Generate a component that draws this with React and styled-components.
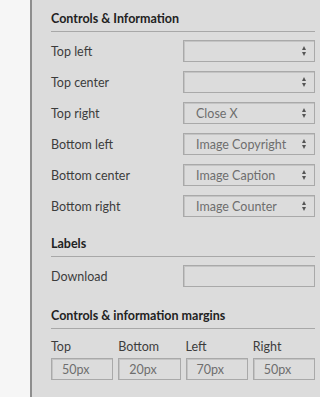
import styled, { createGlobalStyle } from 'styled-components';

const GlobalStyle = createGlobalStyle`
  html, body {
    margin: 0;
    padding: 0;
    background: #ffffff;
  }
  body {
    font-family: Lato, "Liberation Sans", sans-serif;
  }
`;

const Page = styled.div`
  display: flex;
  width: 320px;
  height: 397px;
  overflow: hidden;
`;

const Gutter = styled.div`
  width: 30px;
  flex-shrink: 0;
  background: #f6f6f6;
`;

const Panel = styled.div`
  flex: 1;
  background: #dcdcdc;
  border-left: 2px solid #8e8e8e;
  padding: 0 5px 0 19px;
`;

const SectionTitle = styled.div`
  margin-top: ${props => props.top}px;
  line-height: 20px;
  padding-bottom: 2px;
  border-bottom: 1px solid #a8a8a8;
  font-size: 12.5px;
  font-weight: 700;
  color: #222222;
`;

const RowList = styled.div`
  display: flex;
  flex-direction: column;
  gap: 9px;
  padding-top: 8px;
`;

const Row = styled.div`
  display: flex;
  align-items: center;
  justify-content: space-between;
  height: 22px;
`;

const Label = styled.span`
  font-size: 12.5px;
  color: #3c3c3c;
`;

const Field = styled.div`
  box-sizing: border-box;
  width: ${props => props.width || '132px'};
  height: 22px;
  display: flex;
  align-items: center;
  justify-content: space-between;
  padding: 0 8px 0 ${props => props.pad || 12}px;
  border: 1px solid #a9a9a9;
  box-shadow: inset 1px 1px 0 #c4c4c4;
  background: #dcdcdc;
  font-size: 12.5px;
  color: #6e6e6e;
`;

const Arrows = styled.span`
  display: flex;
  flex-direction: column;
  gap: 2px;
  margin-left: auto;
`;

const Tri = styled.span`
  width: 0;
  height: 0;
  border-left: 2.5px solid transparent;
  border-right: 2.5px solid transparent;
  ${props => (props.down ? 'border-top: 4px solid #555;' : 'border-bottom: 4px solid #555;')}
`;

const MarginGrid = styled.div`
  display: grid;
  grid-template-columns: repeat(4, 1fr);
  column-gap: 5px;
  padding-top: 10px;
`;

const MarginCell = styled.div`
  display: flex;
  flex-direction: column;
  gap: 3px;
`;

const MarginLabel = styled.span`
  font-size: 12.5px;
  line-height: 16px;
  color: #3c3c3c;
`;

const Select = ({ value }) => (
  <Field>
    <span>{value}</span>
    <Arrows>
      <Tri />
      <Tri down />
    </Arrows>
  </Field>
);

const positions = [
  ['Top left', ''],
  ['Top center', ''],
  ['Top right', 'Close X'],
  ['Bottom left', 'Image Copyright'],
  ['Bottom center', 'Image Caption'],
  ['Bottom right', 'Image Counter'],
];

const margins = [
  ['Top', '50px'],
  ['Bottom', '20px'],
  ['Left', '70px'],
  ['Right', '50px'],
];

export default function App() {
  return (
    <Page>
      <GlobalStyle />
      <Gutter />
      <Panel>
        <SectionTitle top={9}>Controls &amp; Information</SectionTitle>
        <RowList>
          {positions.map(([label, value]) => (
            <Row key={label}>
              <Label>{label}</Label>
              <Select value={value} />
            </Row>
          ))}
        </RowList>

        <SectionTitle top={17}>Labels</SectionTitle>
        <RowList>
          <Row>
            <Label>Download</Label>
            <Field />
          </Row>
        </RowList>

        <SectionTitle top={19}>Controls &amp; information margins</SectionTitle>
        <MarginGrid>
          {margins.map(([label, value]) => (
            <MarginCell key={label}>
              <MarginLabel>{label}</MarginLabel>
              <Field width="100%" pad={10}>{value}</Field>
            </MarginCell>
          ))}
        </MarginGrid>
      </Panel>
    </Page>
  );
}
